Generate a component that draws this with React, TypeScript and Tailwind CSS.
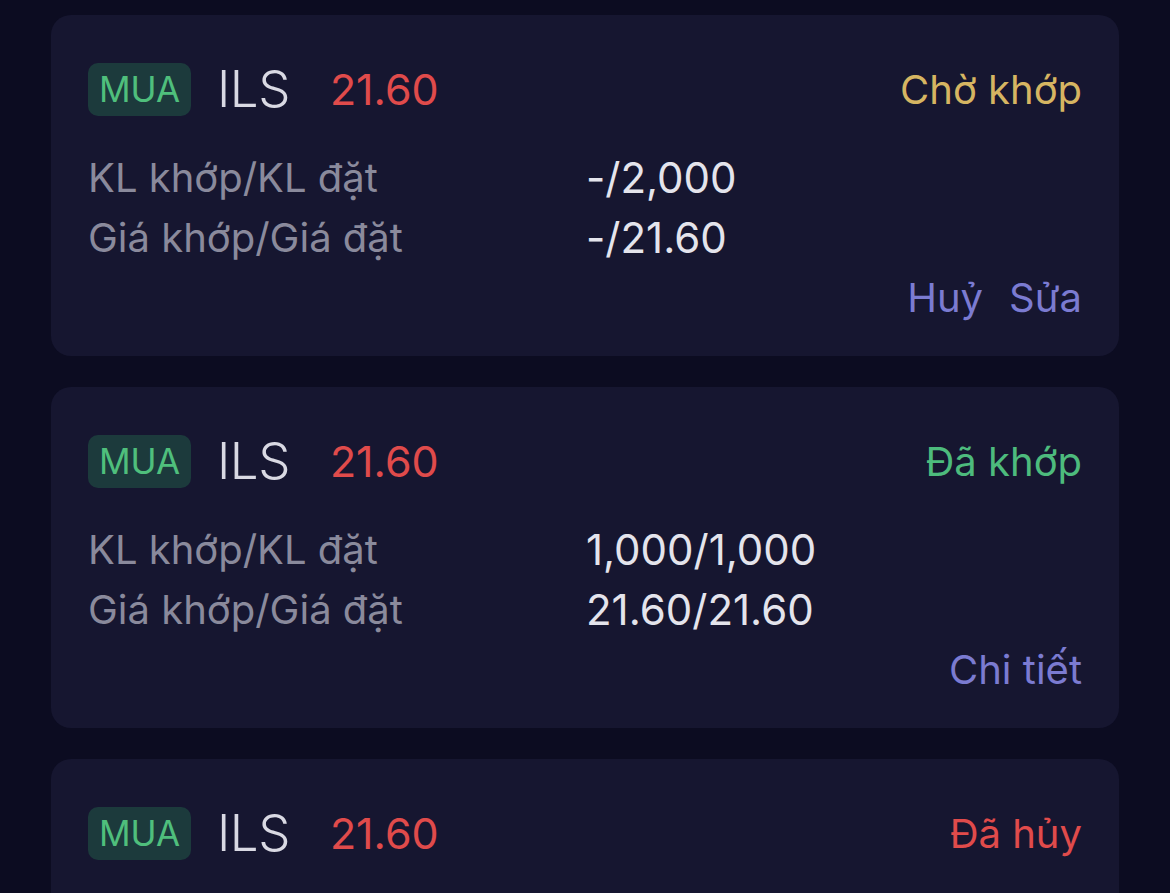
const ORDERS = [
  {
    side: "MUA",
    symbol: "ILS",
    price: "21.60",
    status: "Chờ khớp",
    statusColor: "text-[#d6b562]",
    volume: "-/2,000",
    matchPrice: "-/21.60",
    actions: ["Huỷ", "Sửa"],
  },
  {
    side: "MUA",
    symbol: "ILS",
    price: "21.60",
    status: "Đã khớp",
    statusColor: "text-[#4dbb7d]",
    volume: "1,000/1,000",
    matchPrice: "21.60/21.60",
    actions: ["Chi tiết"],
  },
  {
    side: "MUA",
    symbol: "ILS",
    price: "21.60",
    status: "Đã hủy",
    statusColor: "text-[#e04b4b]",
    volume: "-/1,000",
    matchPrice: "-/21.60",
    actions: ["Chi tiết"],
  },
];

export default function App() {
  return (
    <div
      className="h-[893px] overflow-hidden bg-[#0c0c21] px-[51px] pt-[15px] flex flex-col gap-[31px]"
      style={{ fontFamily: "Inter, 'Noto Sans', sans-serif" }}
    >
      {ORDERS.map((o, i) => (
        <div key={`order-${i}`} className="shrink-0 rounded-[20px] bg-[#161630] px-[37px] pt-[48px] pb-[28px]">
          <div className="flex items-center h-[53px]">
            <div className="h-[53px] w-[103px] rounded-[10px] bg-[#1c3a3c] text-[35px] text-[#4fbf7c] flex items-center justify-center">
              {o.side}
            </div>
            <div className="ml-[26px] text-[51px] font-light text-[#d9d9e3] tracking-[-0.5px]">{o.symbol}</div>
            <div className="ml-[40px] text-[43px] text-[#e04b4b]">{o.price}</div>
            <div className={`ml-auto text-[40px] ${o.statusColor}`}>{o.status}</div>
          </div>
          <div className="mt-[32px] grid grid-cols-[498px_1fr] text-[40px] leading-[60px]">
            <div className="text-[#8a8a9c]">KL khớp/KL đặt</div>
            <div className="text-[42px] text-[#e4e4ec]">{o.volume}</div>
            <div className="text-[#8a8a9c]">Giá khớp/Giá đặt</div>
            <div className="text-[42px] text-[#e4e4ec]">{o.matchPrice}</div>
          </div>
          <div className="flex justify-end gap-[26px] text-[40px] leading-[60px] text-[#7b7bd1]">
            {o.actions.map((a) => (
              <span key={a}>{a}</span>
            ))}
          </div>
        </div>
      ))}
    </div>
  );
}
